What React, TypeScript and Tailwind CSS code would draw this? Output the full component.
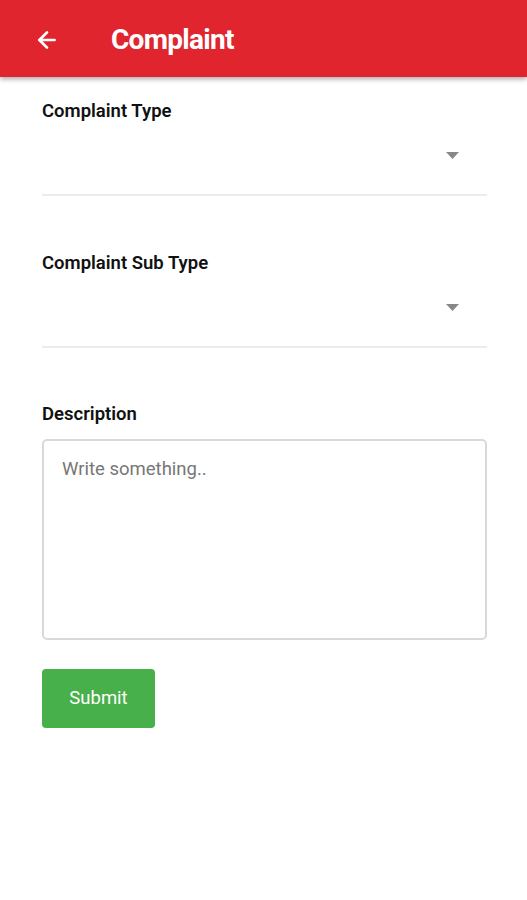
import { ArrowLeft } from "lucide-react";

export default function App() {
  return (
    <div className="min-h-[900px] w-full bg-white font-['Roboto',sans-serif]">
      {/* HEADER */}
      <div className="flex h-[77px] items-center bg-[#e0252f] shadow-[0_2px_5px_rgba(0,0,0,0.35)]">
        <ArrowLeft className="ml-[34px] mt-[2px] h-[26px] w-[26px] text-white" strokeWidth={2.5} />
        <h1 className="ml-[51px] mt-[2px] text-[28px] font-bold tracking-tight text-white">Complaint</h1>
      </div>

      {/* FORM */}
      <div className="flex flex-col pl-[42px] pr-[40px] pt-[21px]">
        <SelectField label="Complaint Type" />
        <div className="h-[54px]" />
        <SelectField label="Complaint Sub Type" />

        <label className="mt-[53px] text-[18.5px] font-semibold text-[#111]">Description</label>
        <textarea
          placeholder="Write something.."
          className="mt-[11px] h-[201px] w-full resize-none rounded-[5px] border-2 border-[#d9d9d9] px-[18px] py-[15px] text-[18.5px] text-[#333] outline-none placeholder:text-[#777]"
        />

        <button className="mt-[29px] h-[59px] w-[113px] rounded-[4px] bg-[#47b04b] text-[18.5px] text-white">
          Submit
        </button>
      </div>
    </div>
  );
}

function SelectField({ label }: { label: string }) {
  return (
    <div className="flex flex-col">
      <label className="text-[18.5px] font-semibold text-[#111]">{label}</label>
      <div className="flex h-[70px] items-center justify-end border-b-2 border-[#ececec] pr-[28px]">
        <svg width="13" height="7" viewBox="0 0 13 7" className="-mt-[8px]">
          <path d="M0 0h13L6.5 7z" fill="#888" />
        </svg>
      </div>
    </div>
  );
}
